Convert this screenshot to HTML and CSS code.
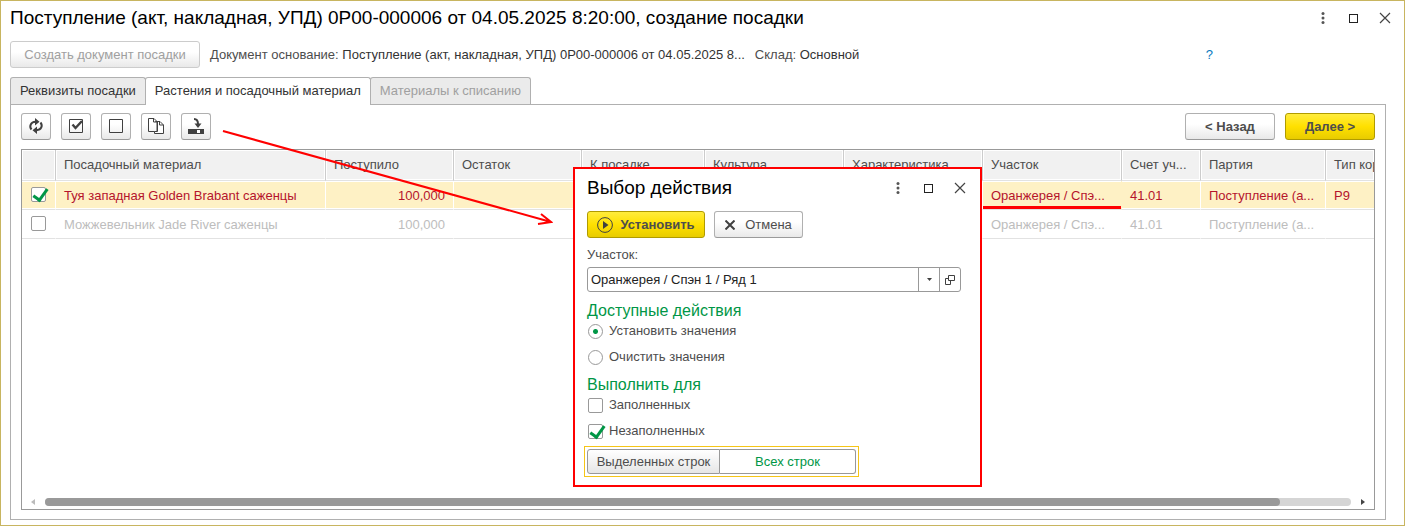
FILE: index.html
```html
<!DOCTYPE html>
<html lang="ru">
<head>
    <meta charset="UTF-8">
    <meta name="viewport" content="width=device-width, initial-scale=1.0">
    <title>Создание посадки</title>
    <link rel="stylesheet" href="styles.css">
</head>
<body>

<div class="window">
    <header class="titlebar">
        <h1>Поступление (акт, накладная, УПД) 0Р00-000006 от 04.05.2025 8:20:00, создание посадки</h1>
        <div class="window-buttons">
            <button type="button" aria-label="Меню"><svg width="12" height="12" viewBox="0 0 12 12" fill="#555"><circle cx="6" cy="1.5" r="1.5"/><circle cx="6" cy="6" r="1.5"/><circle cx="6" cy="10.5" r="1.5"/></svg></button>
            <button type="button" aria-label="Развернуть"><svg width="12" height="12" viewBox="0 0 12 12" fill="none" stroke="#222"><rect x="1.500" y="2.500" width="8" height="8"/></svg></button>
            <button type="button" aria-label="Закрыть"><svg width="12" height="12" viewBox="0 0 12 12" fill="none" stroke="#444" stroke-width="1.2"><path d="M1 1l10 10M11 1L1 11"/></svg></button>
        </div>
    </header>

    <div class="info">
        <button type="button" class="btn" disabled>Создать документ посадки</button>
        <span class="base-doc">Документ основание: <b>Поступление (акт, накладная, УПД) 0Р00-000006 от 04.05.2025 8...</b></span>
        <span class="store">Склад: <b>Основной</b></span>
        <a href="#" class="help">?</a>
    </div>

    <nav class="tabs">
        <button type="button" class="tab">Реквизиты посадки</button>
        <button type="button" class="tab active">Растения и посадочный материал</button>
        <button type="button" class="tab" disabled>Материалы к списанию</button>
    </nav>

    <main class="panel">
        <div class="toolbar">
            <button type="button" class="btn icon" aria-label="Обновить">
                <svg width="16" height="16" viewBox="0 0 16 16" fill="none" stroke="#404040" stroke-width="2"><path d="M3.500 11.500C1 8.500 2.500 4 7.500 3.800M12.500 4.500C15 7.500 13.500 12 8.500 12.200"/><path d="M7 0l4.500 3.800L7 7.500zM9 8.500l-4.500 3.700L9 16z" fill="#404040" stroke="none"/></svg>
            </button>
            <button type="button" class="btn icon" aria-label="Отметить все">
                <svg width="16" height="16" viewBox="0 0 16 16" fill="none" stroke="#404040"><path d="M1.500 1.500h13v13h-13z"/><path d="M4.500 6.500l3 3.500L14 3" stroke-width="2.400"/></svg>
            </button>
            <button type="button" class="btn icon" aria-label="Снять отметки">
                <svg width="16" height="16" viewBox="0 0 16 16" fill="none" stroke="#404040"><path d="M1.500 1.500h13v13h-13z"/></svg>
            </button>
            <button type="button" class="btn icon" aria-label="Скопировать">
                <svg width="16" height="16" viewBox="0 0 16 16" fill="none" stroke="#404040"><path d="M6.500 13.500h-6v-13h5.500l3 3v10z"/><path d="M5.500.5v3.500h3.500"/><path d="M7.500 3.500h4.500l3.500 3.500v8.500h-9v-2h3v-10z" fill="#fff"/><path d="M11.500 3.500v3.500h4"/></svg>
            </button>
            <button type="button" class="btn icon" aria-label="Заполнить">
                <svg width="16" height="16" viewBox="0 0 16 16"><path d="M0 11h16v5H0z" fill="#404040"/><path d="M9 12h3v3H9z" fill="#fff"/><path d="M6 1c3 0 4 2 4 5" fill="none" stroke="#404040" stroke-width="2"/><path d="M6.500 5.500h7L10 10z" fill="#404040"/></svg>
            </button>
            <button type="button" class="btn nav-btn back">&lt; Назад</button>
            <button type="button" class="btn nav-btn primary">Далее &gt;</button>
        </div>

        <div class="grid">
            <table>
                <colgroup>
                    <col class="w-check"><col class="w-name"><col class="w-num"><col class="w-num"><col class="w-plant"><col class="w-text"><col class="w-text"><col class="w-text"><col class="w-account"><col class="w-batch"><col>
                </colgroup>
                <thead>
                    <tr>
                        <th></th>
                        <th>Посадочный материал</th>
                        <th>Поступило</th>
                        <th>Остаток</th>
                        <th>К посадке</th>
                        <th>Культура</th>
                        <th>Характеристика</th>
                        <th>Участок</th>
                        <th>Счет уч...</th>
                        <th>Партия</th>
                        <th>Тип кор</th>
                    </tr>
                </thead>
                <tbody>
                    <tr class="selected">
                        <td class="pick"><input type="checkbox" class="check" aria-label="Туя западная" checked></td>
                        <td>Туя западная Golden Brabant саженцы</td>
                        <td class="num">100,000</td>
                        <td></td>
                        <td></td>
                        <td></td>
                        <td></td>
                        <td class="marked">Оранжерея / Спэ...</td>
                        <td>41.01</td>
                        <td>Поступление (а...</td>
                        <td>P9</td>
                    </tr>
                    <tr class="muted">
                        <td class="pick"><input type="checkbox" class="check" aria-label="Можжевельник"></td>
                        <td>Можжевельник Jade River саженцы</td>
                        <td class="num">100,000</td>
                        <td></td>
                        <td></td>
                        <td></td>
                        <td></td>
                        <td>Оранжерея / Спэ...</td>
                        <td>41.01</td>
                        <td>Поступление (а...</td>
                        <td></td>
                    </tr>
                </tbody>
            </table>
            <div class="scrollbar">
                <svg width="4" height="6" viewBox="0 0 4 6" fill="#bbb"><path d="M4 0v6L0 3z"/></svg>
                <div class="track"><div class="thumb"></div></div>
                <svg width="4" height="6" viewBox="0 0 4 6" fill="#444"><path d="M0 0v6l4-3z"/></svg>
            </div>
        </div>
    </main>

    <svg class="arrow" width="332" height="98" viewBox="0 0 332 98" fill="none" stroke="#f00" stroke-width="2"><path d="M2 2l328 91M320 85l10 8-13 2"/></svg>

    <section class="dialog" role="dialog" aria-label="Выбор действия">
        <header class="titlebar">
            <h2>Выбор действия</h2>
            <div class="window-buttons">
                <button type="button" aria-label="Меню"><svg width="12" height="12" viewBox="0 0 12 12" fill="#555"><circle cx="6" cy="1.5" r="1.5"/><circle cx="6" cy="6" r="1.5"/><circle cx="6" cy="10.5" r="1.5"/></svg></button>
                <button type="button" aria-label="Развернуть"><svg width="12" height="12" viewBox="0 0 12 12" fill="none" stroke="#222"><rect x="1.500" y="2.500" width="8" height="8"/></svg></button>
                <button type="button" aria-label="Закрыть"><svg width="12" height="12" viewBox="0 0 12 12" fill="none" stroke="#444" stroke-width="1.2"><path d="M1 1l10 10M11 1L1 11"/></svg></button>
            </div>
        </header>

        <div class="actions">
            <button type="button" class="btn primary apply">
                <svg width="16" height="16" viewBox="0 0 16 16"><circle cx="8" cy="8" r="7.400" fill="none" stroke="#404040"/><path d="M6 4l5.500 4L6 12z" fill="#404040"/></svg>
                Установить
            </button>
            <button type="button" class="btn cancel">
                <svg width="10" height="10" viewBox="0 0 10 10" fill="none" stroke="#404040" stroke-width="2"><path d="M.5.5l9 9M9.500.5l-9 9"/></svg>
                Отмена
            </button>
        </div>

        <label for="area" class="field-label">Участок:</label>
        <div class="field">
            <input type="text" id="area" value="Оранжерея / Спэн 1 / Ряд 1">
            <button type="button" aria-label="Выбрать"><svg width="5" height="3" viewBox="0 0 5 3" fill="#404040"><path d="M0 0h5L2.500 3z"/></svg></button>
            <button type="button" aria-label="Открыть"><svg width="10" height="10" viewBox="0 0 10 10" fill="none" stroke="#404040"><path d="M3.500.5h6v5h-6zM3.500 3.500h-3v6h5v-4"/></svg></button>
        </div>

        <h3>Доступные действия</h3>
        <label class="option"><input type="radio" name="action" class="radio" checked>Установить значения</label>
        <label class="option"><input type="radio" name="action" class="radio">Очистить значения</label>

        <h3>Выполнить для</h3>
        <label class="option"><input type="checkbox" class="check">Заполненных</label>
        <label class="option"><input type="checkbox" class="check" checked>Незаполненных</label>

        <div class="switch">
            <button type="button">Выделенных строк</button>
            <button type="button" class="on">Всех строк</button>
        </div>
    </section>
</div>

</body>
</html>
```

FILE: styles.css
```css
* {
    box-sizing: border-box;
}
body {
    margin: 0;
    font-family: "Liberation Sans", Arial, sans-serif;
    font-size: 13px;
    line-height: 16px;
    color: #4d4d4d;
    background-color: #fff;
}
button, input {
    font: inherit;
    color: inherit;
    margin: 0;
}
svg {
    display: block;
    flex: none;
}
.window {
    position: relative;
    display: flex;
    flex-direction: column;
    min-height: 100vh;
    padding: 0 18px 5px 9px;
    border: 1px solid #c8b560;
}
.titlebar {
    display: flex;
    align-items: center;
    justify-content: space-between;
}
.window > .titlebar {
    height: 34px;
    margin-right: -9px;
}
h1, h2 {
    margin: 0;
    font-size: 19px;
    line-height: 24px;
    font-weight: normal;
    color: #000;
    white-space: nowrap;
}
.window-buttons {
    display: flex;
    gap: 11px;
}
.window-buttons button {
    display: flex;
    align-items: center;
    justify-content: center;
    width: 20px;
    height: 20px;
    padding: 0;
    border: 0;
    background: none;
}

/* кнопки */
.btn {
    display: flex;
    align-items: center;
    justify-content: center;
    height: 27px;
    padding: 0 12px;
    border: 1px solid #b0b0b0;
    border-bottom-color: #9a9a9a;
    border-radius: 3px;
    background: linear-gradient(#fff 40%, #e9e9e9);
    white-space: nowrap;
}
.btn:disabled {
    color: #a0a0a0;
    border-color: #ccc;
}
.btn.icon {
    width: 30px;
    padding: 0 0 2px;
}
.btn.primary {
    border-color: #b09b00;
    background: linear-gradient(#ffec3d, #ffe000 50%, #e8cc00);
    font-weight: bold;
}
.nav-btn {
    width: 90px;
    font-weight: bold;
}
.back {
    margin-left: auto;
}

.info {
    display: flex;
    align-items: center;
    gap: 10px;
    margin-top: 6px;
}
.info .btn {
    width: 190px;
}
.info b {
    font-weight: normal;
    color: #333;
}
.base-doc, .store {
    white-space: nowrap;
}
.help {
    margin-left: auto;
    margin-right: 173px;
    color: #0a7ac0;
    text-decoration: none;
}

/* вкладки */
.tabs {
    display: flex;
    margin-top: 9px;
}
.tab {
    height: 27px;
    padding: 0 9px;
    border: 1px solid #b0b0b0;
    border-bottom: 0;
    border-radius: 3px 3px 0 0;
    background-color: #ebebeb;
    color: #333;
    white-space: nowrap;
}
.tab + .tab {
    margin-left: -1px;
}
.tab.active {
    position: relative;
    height: 28px;
    margin-bottom: -1px;
    padding-bottom: 1px;
    background-color: #fff;
}
.tab:disabled {
    color: #a0a0a0;
}
.panel {
    flex: 1;
    display: flex;
    flex-direction: column;
    padding: 8px 10px 9px;
    border: 1px solid #b0b0b0;
}
.toolbar {
    display: flex;
    gap: 10px;
    margin-bottom: 9px;
}

/* таблица */
.grid {
    flex: 1;
    display: flex;
    flex-direction: column;
    justify-content: space-between;
    border: 1px solid #999;
    overflow: hidden;
}
table {
    width: 100%;
    table-layout: fixed;
    border-collapse: separate;
    border-spacing: 0;
}
.w-check { width: 34px; }
.w-name { width: 270px; }
.w-num { width: 128px; }
.w-plant { width: 123px; }
.w-text { width: 139px; }
.w-account { width: 79px; }
.w-batch { width: 125px; }
th, td {
    padding: 0 8px;
    height: 29px;
    border-right: 1px solid transparent;
    border-bottom: 1px solid #e2e2e2;
    text-align: left;
    font-weight: normal;
    white-space: nowrap;
    overflow: hidden;
    text-overflow: ellipsis;
}
td {
    padding-top: 2px;
}
th {
    height: 31px;
    border-right-color: #ccc;
    background-color: #f1f1f1;
    box-shadow: inset 0 0 0 1px #fff;
}
th:last-child, td:last-child {
    padding-right: 0;
    border-right: 0;
    text-overflow: clip;
}
.selected td {
    border-right-color: #fff;
    background-color: #fef1c5;
    box-shadow: inset 0 1px #fff, inset 0 -1px #fff;
    color: #b5142c;
}
.selected .marked {
    border-right-color: #fef1c5;
    box-shadow: inset 0 1px #fff, inset 0 -3px #f00;
}
.muted td {
    color: #bdbdbd;
}
.num {
    text-align: right;
}
td.pick {
    padding: 0 0 2px 9px;
}

.scrollbar {
    display: flex;
    align-items: center;
    justify-content: space-between;
    gap: 10px;
    padding: 0 9px 3px;
}
.track {
    flex: 1;
    height: 8px;
    border-radius: 4px;
    background-color: #d5d5d5;
}
.thumb {
    width: 94.6%;
    height: 8px;
    border-radius: 4px;
    background-color: #999;
}

/* флажки и переключатели */
.check, .radio {
    appearance: none;
    display: block;
    flex: none;
    width: 15px;
    height: 15px;
    border: 1px solid #999;
    border-radius: 2px;
    background-color: #fff;
}
.radio {
    border-radius: 50%;
}
.radio:checked {
    background-image: radial-gradient(circle, #009646 2px, transparent 3px);
}
.check:checked {
    position: relative;
}
.check:checked::after {
    content: "";
    position: absolute;
    left: 4px;
    top: -2px;
    width: 6px;
    height: 12px;
    border: solid #009646;
    border-width: 0 3px 3px 0;
    transform: rotate(36deg);
}

.arrow {
    position: absolute;
    left: 220px;
    top: 128px;
}

/* окно выбора действия */
.dialog {
    position: absolute;
    left: 572px;
    top: 166px;
    width: 409px;
    padding: 6px 12px 8px;
    border: 2px solid #f00;
    background-color: #fff;
}
.dialog .titlebar {
    height: 26px;
    margin-right: -2px;
}
.actions {
    display: flex;
    gap: 9px;
    margin: 10px 0 9px;
}
.apply {
    width: 118px;
    padding: 0;
    gap: 7px;
}
.cancel {
    width: 89px;
    padding: 0;
    gap: 10px;
}
.field-label {
    display: block;
}
.field {
    display: flex;
    width: 374px;
    height: 25px;
    margin-top: 4px;
    border: 1px solid #999;
    border-radius: 3px;
}
.field input {
    flex: 1;
    min-width: 0;
    padding: 0 3px;
    border: 0;
    background: none;
    color: #222;
    outline: none;
}
.field button {
    display: flex;
    align-items: center;
    justify-content: center;
    width: 21px;
    padding: 0;
    border: 0;
    border-left: 1px solid #999;
    background: none;
}
h3 {
    margin: 8px 0 0;
    font-size: 16px;
    line-height: 21px;
    font-weight: normal;
    color: #009646;
}
.option {
    display: flex;
    align-items: center;
    gap: 6px;
    height: 20px;
    padding-left: 1px;
}
.option + .option {
    margin-top: 6px;
}
.option + h3 {
    margin-top: 7px;
}
.switch {
    display: flex;
    width: 275px;
    margin: 5px 0 0 -3px;
    padding: 2px;
    border: 1px solid #f5c518;
}
.switch button {
    width: 133px;
    height: 25px;
    padding: 0;
    border: 1px solid #999;
    border-radius: 3px 0 0 3px;
    background: linear-gradient(#fff, #e6e6e6);
    white-space: nowrap;
}
.switch .on {
    flex: 1;
    border-left: 0;
    border-radius: 0 3px 3px 0;
    background: #fff;
    color: #009646;
}
```
